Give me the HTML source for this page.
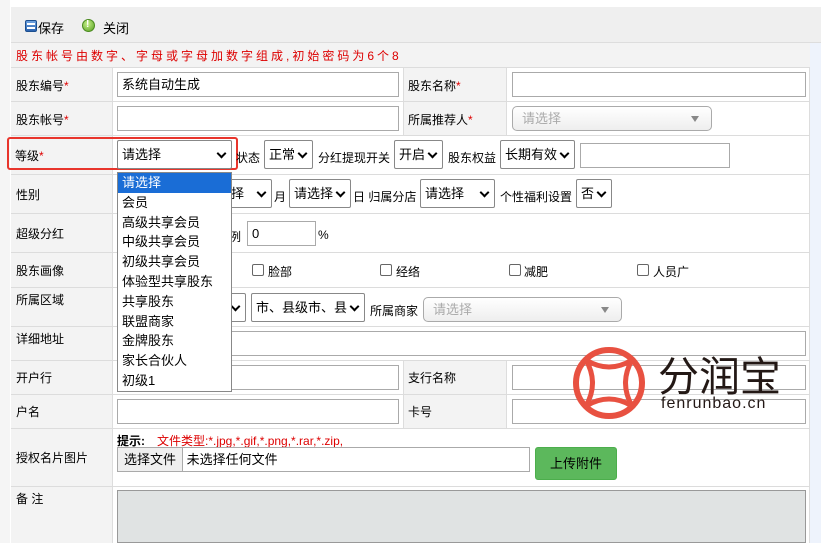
<!DOCTYPE html>
<html><head><meta charset="utf-8">
<style>
*{box-sizing:border-box;margin:0;padding:0}
body{width:821px;height:543px;overflow:hidden;background:#fff;font-family:"Liberation Sans","Noto Sans CJK SC",sans-serif;font-size:12px;color:#000;position:relative}
.a{position:absolute}
.lab{position:absolute;background:#f3f3f3;border-right:1px solid #ddd;padding-left:5px}
.hl{position:absolute;left:11px;width:799px;height:1px;background:#dcdcdc}
.inp{position:absolute;border:1px solid #aaa;background:#fff;height:25px;font-size:13px;padding-left:4px;line-height:23px}
.sel{position:absolute;border:1px solid #888;border-radius:2px;background:#fff;height:29px;font-size:13px;line-height:27px;padding-left:4px;white-space:nowrap}
.sel:after{content:"";position:absolute;right:6px;top:9px;width:5px;height:5px;border-right:2px solid #000;border-bottom:2px solid #000;transform:rotate(45deg)}
.dd{position:absolute;border:1px solid #aaa;border-radius:5px;height:25px;background:linear-gradient(#fff,#eee);color:#aaa;font-size:13px;line-height:23px;padding-left:9px}
.dd:after{content:"";position:absolute;right:12px;top:9px;border-left:4px solid transparent;border-right:4px solid transparent;border-top:6px solid #888}
.t{position:absolute;white-space:nowrap}
.r{color:#d00}
.cb{position:absolute;width:12px;height:12px;border:1px solid #666;border-radius:2px;background:#fff}
</style></head><body>
<div class="a" style="left:0;top:0;width:10px;height:543px;background:#f5f5f5"></div>
<div class="a" style="left:810px;top:43px;width:11px;height:500px;background:#eef3fc"></div>
<div class="a" style="left:11px;top:7px;width:810px;height:36px;background:#efefef;border-bottom:1px solid #ddd"></div>
<div class="a" style="left:25px;top:20px;width:12px;height:12px;border:1px solid #1c4f8f;border-radius:2px;background:linear-gradient(#6fa3e0,#2a62b0)"><div style="margin:2px 1px;height:2px;background:#fff"></div><div style="margin:1px 1px;height:2px;background:#fff"></div></div>
<div class="t" style="left:38px;top:18px;font-size:13px">保存</div>
<div class="a" style="left:82px;top:19px;width:13px;height:13px;border-radius:50%;background:radial-gradient(circle at 40% 35%,#c8f08a,#55a020);border:1px solid #4a8a20"></div>
<div class="t" style="left:86px;top:19px;font-size:10px;color:#fff;font-weight:bold">!</div>
<div class="t" style="left:103px;top:18px;font-size:13px">关闭</div>
<div class="a" style="left:11px;top:43px;width:799px;height:24px;background:#f3f3f3"></div>
<div class="t" style="left:16px;top:47px;color:#d00;font-size:12px;letter-spacing:3px">股东帐号由数字、字母或字母加数字组成,初始密码为6个8</div>
<div class="a" style="left:11px;top:67px;width:799px;height:476px;border-left:1px solid #ddd;border-right:1px solid #ddd"></div>
<div class="lab" style="left:11px;top:67px;width:102px;height:476px"></div>
<div class="lab" style="left:403px;top:67px;width:104px;height:68px;border-left:1px solid #ddd"></div>
<div class="lab" style="left:403px;top:360px;width:104px;height:68px;border-left:1px solid #ddd"></div>
<div class="hl" style="top:67px"></div><div class="hl" style="top:101px"></div><div class="hl" style="top:135px"></div><div class="hl" style="top:174px"></div><div class="hl" style="top:213px"></div><div class="hl" style="top:252px"></div><div class="hl" style="top:287px"></div><div class="hl" style="top:326px"></div><div class="hl" style="top:360px"></div><div class="hl" style="top:394px"></div><div class="hl" style="top:428px"></div><div class="hl" style="top:486px"></div>
<div class="t" style="left:16px;top:77px">股东编号<span class="r">*</span></div>
<div class="t" style="left:16px;top:111px">股东帐号<span class="r">*</span></div>
<div class="t" style="left:15px;top:147px">等级<span class="r">*</span></div>
<div class="t" style="left:16px;top:186px">性别</div>
<div class="t" style="left:16px;top:225px">超级分红</div>
<div class="t" style="left:16px;top:262px">股东画像</div>
<div class="t" style="left:16px;top:291px">所属区域</div>
<div class="t" style="left:16px;top:330px">详细地址</div>
<div class="t" style="left:16px;top:369px">开户行</div>
<div class="t" style="left:16px;top:403px">户名</div>
<div class="t" style="left:16px;top:449px">授权名片图片</div>
<div class="t" style="left:16px;top:490px">备 注</div>
<div class="t" style="left:408px;top:77px">股东名称<span class="r">*</span></div>
<div class="t" style="left:408px;top:111px">所属推荐人<span class="r">*</span></div>
<div class="t" style="left:408px;top:369px">支行名称</div>
<div class="t" style="left:408px;top:403px">卡号</div>
<div class="inp" style="left:117px;top:72px;width:282px">系统自动生成</div>
<div class="inp" style="left:512px;top:72px;width:294px"></div>
<div class="inp" style="left:117px;top:106px;width:282px"></div>
<div class="dd" style="left:512px;top:106px;width:200px">请选择</div>
<div class="a" style="left:7px;top:137px;width:231px;height:33px;border:2px solid #e8352c;border-radius:3px"></div>
<div class="sel" style="left:117px;top:140px;width:115px">请选择</div>
<div class="t" style="left:236px;top:149px">状态</div>
<div class="sel" style="left:264px;top:140px;width:49px">正常</div>
<div class="t" style="left:318px;top:149px">分红提现开关</div>
<div class="sel" style="left:394px;top:140px;width:49px">开启</div>
<div class="t" style="left:448px;top:149px">股东权益</div>
<div class="sel" style="left:500px;top:140px;width:75px">长期有效</div>
<div class="inp" style="left:580px;top:143px;width:150px"></div>
<div class="sel" style="left:200px;top:179px;width:72px">请选择</div>
<div class="t" style="left:274px;top:188px">月</div>
<div class="sel" style="left:289px;top:179px;width:62px">请选择</div>
<div class="t" style="left:353px;top:188px">日 归属分店</div>
<div class="sel" style="left:420px;top:179px;width:75px">请选择</div>
<div class="t" style="left:500px;top:188px">个性福利设置</div>
<div class="sel" style="left:576px;top:179px;width:36px">否</div>
<div class="t" style="left:229px;top:228px">例</div>
<div class="inp" style="left:247px;top:221px;width:69px">0</div>
<div class="t" style="left:318px;top:228px">%</div>
<div class="cb" style="left:252px;top:264px"></div><div class="t" style="left:268px;top:263px">脸部</div>
<div class="cb" style="left:380px;top:264px"></div><div class="t" style="left:396px;top:263px">经络</div>
<div class="cb" style="left:509px;top:264px"></div><div class="t" style="left:524px;top:263px">减肥</div>
<div class="cb" style="left:637px;top:264px"></div><div class="t" style="left:653px;top:263px">人员广</div>
<div class="sel" style="left:200px;top:293px;width:46px"></div>
<div class="sel" style="left:251px;top:293px;width:114px">市、县级市、县</div>
<div class="t" style="left:370px;top:302px">所属商家</div>
<div class="dd" style="left:423px;top:297px;width:199px">请选择</div>
<div class="inp" style="left:117px;top:331px;width:689px"></div>
<div class="inp" style="left:117px;top:365px;width:282px"></div>
<div class="inp" style="left:512px;top:365px;width:294px"></div>
<div class="inp" style="left:117px;top:399px;width:282px"></div>
<div class="inp" style="left:512px;top:399px;width:294px"></div>
<div class="t" style="left:117px;top:432px;font-weight:bold">提示:</div>
<div class="t" style="left:157px;top:432px;color:#d00">文件类型:*.jpg,*.gif,*.png,*.rar,*.zip,</div>
<div class="inp" style="left:117px;top:447px;width:413px;padding:0"><span style="display:inline-block;height:23px;padding:0 6px;border-right:1px solid #aaa;background:#efefef;font-size:13px">选择文件</span> 未选择任何文件</div>
<div class="a" style="left:535px;top:447px;width:82px;height:33px;background:#5cb85c;border:1px solid #4cae4c;border-radius:3px;text-align:center;line-height:31px;font-size:13px">上传附件</div>
<div class="a" style="left:117px;top:490px;width:689px;height:53px;background:#e0e3e3;border:1px solid #999"></div>
<div class="a" style="left:117px;top:172px;width:115px;height:220px;background:#fff;border:1px solid #888;font-size:13px;line-height:19.8px">
<div style="background:#1a6dd6;color:#fff;padding-left:4px">请选择</div>
<div style="padding-left:4px">会员</div>
<div style="padding-left:4px">高级共享会员</div>
<div style="padding-left:4px">中级共享会员</div>
<div style="padding-left:4px">初级共享会员</div>
<div style="padding-left:4px">体验型共享股东</div>
<div style="padding-left:4px">共享股东</div>
<div style="padding-left:4px">联盟商家</div>
<div style="padding-left:4px">金牌股东</div>
<div style="padding-left:4px">家长合伙人</div>
<div style="padding-left:4px">初级1</div>
</div>
<svg class="a" style="left:570px;top:344px" width="80" height="80" viewBox="570 344 80 80">
<circle cx="609" cy="383" r="33" fill="none" stroke="#e85141" stroke-width="6"/>
<path d="M586 360 Q609 374 632 360 Q619 383 632 406 Q609 392 586 406 Q599 383 586 360 Z" fill="none" stroke="#e85141" stroke-width="5" stroke-linejoin="round"/>
</svg>
<div class="t" style="left:658px;top:343px;font-size:41px;color:#231815;letter-spacing:0px">分润宝</div>
<div class="t" style="left:661px;top:395px;font-size:16px;color:#231815;letter-spacing:1px">fenrunbao.cn</div>
</body></html>
